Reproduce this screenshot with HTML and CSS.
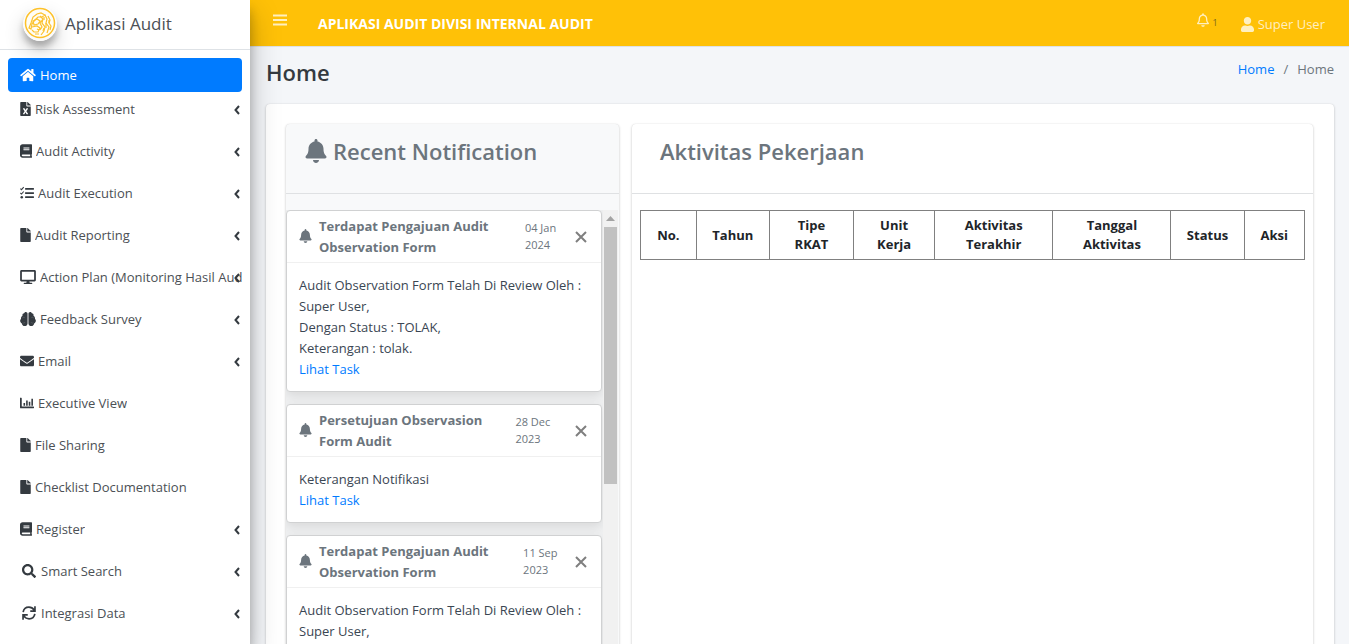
FILE: index.html
```html
<!DOCTYPE html>
<html lang="id">
<head>
<meta charset="utf-8">
<title>Aplikasi Audit</title>
<link rel="stylesheet" href="styles.css">
</head>
<body>
<svg class="sprite" aria-hidden="true">
  <symbol id="home" viewBox="0 0 576 512"><path d="M280.37 148.26L96 300.11V464a16 16 0 0 0 16 16l112.06-.29a16 16 0 0 0 15.92-16V368a16 16 0 0 1 16-16h64a16 16 0 0 1 16 16v95.64a16 16 0 0 0 16 16.05L464 480a16 16 0 0 0 16-16V300L295.67 148.26a12.19 12.19 0 0 0-15.3 0zM571.6 251.47L488 182.56V44.05a12 12 0 0 0-12-12h-56a12 12 0 0 0-12 12v72.61L318.47 43a48 48 0 0 0-61 0L4.34 251.47a12 12 0 0 0-1.6 16.9l25.5 31A12 12 0 0 0 45.15 301l235.22-193.74a12.19 12.19 0 0 1 15.3 0L530.9 301a12 12 0 0 0 16.9-1.6l25.5-31a12 12 0 0 0-1.7-16.93z"/></symbol>
  <symbol id="file" viewBox="0 0 384 512"><path d="M224 136V0H24C10.7 0 0 10.7 0 24v464c0 13.3 10.7 24 24 24h336c13.3 0 24-10.7 24-24V160H248c-13.2 0-24-10.8-24-24zm160-14.1v6.1H256V0h6.1c6.4 0 12.5 2.5 17 7l97.9 98c4.5 4.5 7 10.6 7 16.9z"/></symbol>
  <symbol id="excel" viewBox="0 0 384 512"><path fill-rule="evenodd" d="M224 136V0H24C10.700 0 0 10.700 0 24v464c0 13.300 10.700 24 24 24h336c13.300 0 24-10.700 24-24V160H248c-13.200 0-24-10.800-24-24zm60.100 106.500L224 336l60.100 93.500c5.100 8-.6 18.500-10.100 18.500h-34.900c-4.400 0-8.500-2.400-10.600-6.300C208.900 405.500 192 373 192 373c-6.400 14.800-10 20-36.600 68.800-2.100 3.900-6.100 6.300-10.500 6.300H110c-9.500 0-15.200-10.500-10.100-18.500l60.300-93.500-60.300-93.500c-5.200-8 .6-18.500 10.100-18.500h34.800c4.400 0 8.500 2.400 10.600 6.300 26.100 48.800 20 33.600 36.600 68.500 0 0 6.100-11.700 36.600-68.500 2.100-3.900 6.200-6.300 10.600-6.300H274c9.500-.1 15.200 10.400 10.100 18.400zM384 121.900v6.100H256V0h6.100c6.400 0 12.500 2.500 17 7l97.900 98c4.500 4.500 7 10.600 7 16.900z"/></symbol>
  <symbol id="book" viewBox="0 0 448 512"><path d="M448 360V24c0-13.300-10.700-24-24-24H96C43 0 0 43 0 96v320c0 53 43 96 96 96h328c13.300 0 24-10.700 24-24v-16c0-7.500-3.500-14.300-8.900-18.700-4.200-15.400-4.200-59.300 0-74.700 5.400-4.300 8.900-11.100 8.900-18.600zM128 134c0-3.300 2.700-6 6-6h212c3.300 0 6 2.700 6 6v20c0 3.300-2.700 6-6 6H134c-3.300 0-6-2.700-6-6v-20zm0 64c0-3.300 2.700-6 6-6h212c3.300 0 6 2.700 6 6v20c0 3.300-2.700 6-6 6H134c-3.300 0-6-2.700-6-6v-20zm253.400 250H96c-17.700 0-32-14.300-32-32 0-17.600 14.400-32 32-32h285.400c-1.900 17.100-1.900 46.900 0 64z"/></symbol>
  <symbol id="tasks" viewBox="0 0 512 512"><path d="M200 72h296a16 16 0 0 1 16 16v32a16 16 0 0 1-16 16H200a16 16 0 0 1-16-16V88a16 16 0 0 1 16-16zm0 152h296a16 16 0 0 1 16 16v32a16 16 0 0 1-16 16H200a16 16 0 0 1-16-16v-32a16 16 0 0 1 16-16zm0 152h296a16 16 0 0 1 16 16v32a16 16 0 0 1-16 16H200a16 16 0 0 1-16-16v-32a16 16 0 0 1 16-16z"/><circle cx="64" cy="408" r="46"/><path d="M14 98l40 38 82-92M14 256l40 38 82-92" fill="none" stroke="currentColor" stroke-width="38"/></symbol>
  <symbol id="desktop" viewBox="0 0 576 512"><path fill-rule="evenodd" d="M528 0H48C21.500 0 0 21.500 0 48v320c0 26.500 21.500 48 48 48h192l-16 48h-72c-13.300 0-24 10.700-24 24s10.700 24 24 24h272c13.300 0 24-10.700 24-24s-10.700-24-24-24h-72l-16-48h192c26.500 0 48-21.500 48-48V48c0-26.500-21.500-48-48-48zm-16 352H64V64h448v288z"/></symbol>
  <symbol id="brain" viewBox="0 0 576 512"><path d="M208 0c-30 0-55 21-62 49-35 1-62 30-62 65 0 8 1 15 4 22-33 16-56 48-56 88 0 8 1 15 3 22C14 264 0 292 0 324c0 44 27 79 64 93 3 53 46 95 100 95 56 0 108-41 108-96V64c0-35-29-64-64-64zM368 0c30 0 55 21 62 49 35 1 62 30 62 65 0 8-1 15-4 22 33 16 56 48 56 88 0 8-1 15-3 22 21 18 35 46 35 78 0 44-27 79-64 93-3 53-46 95-100 95-56 0-108-41-108-96V64c0-35 29-64 64-64z"/><path d="M78 220c25-27 58-37 86-14M92 398c35 18 72 2 86-27M498 220c-25-27-58-37-86-14M484 398c-35 18-72 2-86-27" fill="none" stroke="#fff" stroke-opacity=".35" stroke-width="16"/></symbol>
  <symbol id="mail" viewBox="0 0 512 512"><path d="M502.300 190.800c3.900-3.100 9.700-.2 9.700 4.700V400c0 26.500-21.500 48-48 48H48c-26.500 0-48-21.500-48-48V195.600c0-5 5.700-7.800 9.700-4.700 22.400 17.400 52.100 39.500 154.100 113.600 21.100 15.400 56.700 47.800 92.200 47.600 35.700.3 72-32.800 92.300-47.600 102-74.100 131.600-96.300 154-113.700zM256 320c23.200.4 56.600-29.200 73.400-41.400 132.700-96.300 142.800-104.700 173.400-128.700 5.800-4.500 9.200-11.500 9.200-18.900v-19c0-26.500-21.500-48-48-48H48c-26.500 0-48 21.500-48 48v19c0 7.400 3.400 14.300 9.200 18.900 30.600 23.900 40.700 32.400 173.400 128.700 16.800 12.200 50.200 41.800 73.400 41.400z"/></symbol>
  <symbol id="chart" viewBox="0 0 512 512"><path d="M0 64h48a16 16 0 0 1 16 16v304h432a16 16 0 0 1 16 16v32a16 16 0 0 1-16 16H32a32 32 0 0 1-32-32zM128 256h58v96h-58zM224 160h58v192h-58zM320 208h58v144h-58zM416 96h58v256h-58z"/></symbol>
  <symbol id="search" viewBox="0 0 512 512"><path d="M505 442.700L405.300 343c-4.500-4.500-10.600-7-17-7H372c27.600-35.300 44-79.700 44-128C416 93.100 322.900 0 208 0S0 93.100 0 208s93.100 208 208 208c48.300 0 92.700-16.400 128-44v16.300c0 6.400 2.500 12.500 7 17l99.700 99.700c9.400 9.400 24.600 9.400 33.900 0l28.300-28.300c9.400-9.400 9.400-24.600.1-34zM208 336c-70.700 0-128-57.200-128-128 0-70.700 57.200-128 128-128 70.700 0 128 57.200 128 128 0 70.700-57.200 128-128 128z"/></symbol>
  <symbol id="sync" viewBox="0 0 512 512"><path d="M42 222C60 118 146 44 252 44c82 0 150 42 192 106M470 290c-18 104-104 178-210 178-82 0-150-42-192-106M474 12v172H302M38 500V328h172" fill="none" stroke="currentColor" stroke-width="62"/></symbol>
  <symbol id="angle" viewBox="0 0 6 10"><path d="M5 1L1.500 5 5 9" fill="none" stroke="currentColor" stroke-width="2"/></symbol>
  <symbol id="bell" viewBox="0 0 448 512"><path d="M224 512c35.320 0 63.970-28.650 63.970-64H160.030c0 35.350 28.650 64 63.970 64zm215.390-149.710c-19.320-20.760-55.470-51.990-55.470-154.290 0-77.700-54.480-139.900-127.940-155.160V32c0-17.670-14.320-32-31.980-32s-31.980 14.330-31.980 32v20.840C118.560 68.100 64.080 130.300 64.080 208c0 102.300-36.150 133.530-55.470 154.290-6 6.450-8.660 14.160-8.610 21.710.11 16.400 12.980 32 32.100 32h383.800c19.120 0 32-15.600 32.100-32 .05-7.550-2.610-15.270-8.610-21.710z"/></symbol>
  <symbol id="bell-line" viewBox="0 0 448 512"><path d="M439.390 362.290c-19.320-20.760-55.470-51.990-55.470-154.290 0-77.700-54.480-139.900-127.940-155.160V32c0-17.670-14.320-32-31.980-32s-31.980 14.330-31.980 32v20.840C118.560 68.100 64.080 130.300 64.080 208c0 102.300-36.150 133.530-55.470 154.290-6 6.450-8.660 14.160-8.610 21.710.11 16.400 12.980 32 32.100 32h383.800c19.120 0 32-15.600 32.100-32 .05-7.550-2.610-15.270-8.610-21.710zM67.530 368c21.220-27.970 44.420-74.330 44.530-159.420 0-.2-.06-.38-.06-.58 0-61.860 50.140-112 112-112s112 50.140 112 112c0 .2-.06.38-.06.58.11 85.100 23.310 131.460 44.530 159.420H67.530zM224 512c35.320 0 63.970-28.650 63.970-64H160.030c0 35.350 28.650 64 63.970 64z"/></symbol>
  <symbol id="user" viewBox="0 0 448 512"><path d="M224 256c70.700 0 128-57.300 128-128S294.700 0 224 0 96 57.300 96 128s57.300 128 128 128zm89.600 32h-16.700c-22.200 10.200-46.900 16-72.900 16s-50.600-5.800-72.900-16h-16.700C60.200 288 0 348.200 0 422.400V464c0 26.500 21.500 48 48 48h352c26.500 0 48-21.500 48-48v-41.600c0-74.200-60.200-134.400-134.400-134.400z"/></symbol>
</svg>

<aside class="sidebar">
  <a class="brand" href="#">
    <svg class="brand-logo" viewBox="0 0 34 34" aria-hidden="true">
      <circle cx="17" cy="17" r="17" fill="#fbfbfa"/>
      <circle cx="17" cy="16" r="14.500" fill="#fffdf5" stroke="#fdc12a" stroke-width="1.500"/>
      <g fill="none" stroke="#fcc22f" stroke-width="1.200">
        <path d="M6 21l2-5 2-6 4-3 4-1 4 2-3 2-4 0-3 3-3 4-1 5z"/>
        <path d="M10 14l4-2 3 2-2 3-4 1zM9 20l5-1 3 2-2 4-4 0-2-2M17 9l3 3-1 4 3 4-1 4-3 4M22 8l2 4-1 4 3 4-2 6M25 9l2 4-1 3 2 3-1 4M14 22l2 1M12 27l4 0M20 12l-3 4 2 4-2 3"/>
        <path d="M21 10v3M23 16v5M26 13v3M20 24l1-3"/>
      </g>
    </svg>
    <span>Aplikasi Audit</span>
  </a>
  <nav class="menu">
    <a class="item active" href="#"><svg class="icon w16"><use href="#home"/></svg><span>Home</span></a>
    <a class="item" href="#"><svg class="icon w11"><use href="#excel"/></svg><span>Risk Assessment</span><svg class="angle"><use href="#angle"/></svg></a>
    <a class="item" href="#"><svg class="icon w12"><use href="#book"/></svg><span>Audit Activity</span><svg class="angle"><use href="#angle"/></svg></a>
    <a class="item" href="#"><svg class="icon w14"><use href="#tasks"/></svg><span>Audit Execution</span><svg class="angle"><use href="#angle"/></svg></a>
    <a class="item" href="#"><svg class="icon w11"><use href="#file"/></svg><span>Audit Reporting</span><svg class="angle"><use href="#angle"/></svg></a>
    <a class="item" href="#"><svg class="icon w16"><use href="#desktop"/></svg><span>Action Plan (Monitoring Hasil Audit)</span><svg class="angle"><use href="#angle"/></svg></a>
    <a class="item" href="#"><svg class="icon w16"><use href="#brain"/></svg><span>Feedback Survey</span><svg class="angle"><use href="#angle"/></svg></a>
    <a class="item" href="#"><svg class="icon w14"><use href="#mail"/></svg><span>Email</span><svg class="angle"><use href="#angle"/></svg></a>
    <a class="item" href="#"><svg class="icon w14"><use href="#chart"/></svg><span>Executive View</span></a>
    <a class="item" href="#"><svg class="icon w11"><use href="#file"/></svg><span>File Sharing</span></a>
    <a class="item" href="#"><svg class="icon w11"><use href="#file"/></svg><span>Checklist Documentation</span></a>
    <a class="item" href="#"><svg class="icon w12"><use href="#book"/></svg><span>Register</span><svg class="angle"><use href="#angle"/></svg></a>
    <a class="item" href="#"><svg class="icon w14 wide"><use href="#search"/></svg><span>Smart Search</span><svg class="angle"><use href="#angle"/></svg></a>
    <a class="item" href="#"><svg class="icon w14 wide"><use href="#sync"/></svg><span>Integrasi Data</span><svg class="angle"><use href="#angle"/></svg></a>
  </nav>
</aside>

<div class="page">
  <header class="topbar">
    <button class="toggle" type="button" aria-label="Menu"><svg viewBox="0 0 14 12"><path d="M0 1.500h14M0 6h14M0 10.500h14" stroke="currentColor" stroke-width="2"/></svg></button>
    <strong class="app-title">APLIKASI AUDIT DIVISI INTERNAL AUDIT</strong>
    <a class="alerts" href="#" aria-label="Notifikasi"><svg><use href="#bell-line"/></svg><span>1</span></a>
    <a class="user" href="#"><svg><use href="#user"/></svg><span>Super User</span></a>
  </header>

  <main class="content">
    <div class="heading">
      <h1>Home</h1>
      <nav class="crumbs"><a href="#">Home</a><span>/</span><span>Home</span></nav>
    </div>
    <div class="panel">
      <section class="card notif">
        <h2 class="card-head"><svg><use href="#bell"/></svg><span>Recent Notification</span></h2>
        <div class="feed">
          <div class="toasts">
            <article class="toast">
              <header><svg><use href="#bell"/></svg><strong>Terdapat Pengajuan Audit Observation Form</strong><small>04 Jan 2024</small><button type="button" aria-label="Tutup"><svg viewBox="0 0 12 12"><path d="M1 1l10 10M11 1L1 11"/></svg></button></header>
              <p>Audit Observation Form Telah Di Review Oleh : Super User,<br>Dengan Status : TOLAK,<br>Keterangan : tolak.<br><a href="#">Lihat Task</a></p>
            </article>
            <article class="toast">
              <header><svg><use href="#bell"/></svg><strong>Persetujuan Observasion Form Audit</strong><small>28 Dec 2023</small><button type="button" aria-label="Tutup"><svg viewBox="0 0 12 12"><path d="M1 1l10 10M11 1L1 11"/></svg></button></header>
              <p>Keterangan Notifikasi<br><a href="#">Lihat Task</a></p>
            </article>
            <article class="toast">
              <header><svg><use href="#bell"/></svg><strong>Terdapat Pengajuan Audit Observation Form</strong><small>11 Sep 2023</small><button type="button" aria-label="Tutup"><svg viewBox="0 0 12 12"><path d="M1 1l10 10M11 1L1 11"/></svg></button></header>
              <p>Audit Observation Form Telah Di Review Oleh : Super User,<br>Dengan Status : TOLAK,<br>Keterangan : tolak.<br><a href="#">Lihat Task</a></p>
            </article>
          </div>
          <div class="scroll" aria-hidden="true"><svg viewBox="0 0 13 17"><path d="M2 11l4.500-5 4.500 5z" fill="#a3a3a3"/></svg><div class="thumb"></div></div>
        </div>
      </section>
      <section class="card work">
        <h2 class="card-head">Aktivitas Pekerjaan</h2>
        <div class="table-wrap">
          <table>
            <colgroup><col class="c-no"><col class="c-year"><col class="c-type"><col class="c-unit"><col class="c-act"><col class="c-act"><col class="c-year"><col class="c-aksi"></colgroup>
            <thead><tr><th>No.</th><th>Tahun</th><th>Tipe RKAT</th><th>Unit Kerja</th><th>Aktivitas Terakhir</th><th>Tanggal Aktivitas</th><th>Status</th><th>Aksi</th></tr></thead>
          </table>
        </div>
      </section>
    </div>
  </main>
</div>
</body>
</html>
```
FILE: styles.css
```css
* { box-sizing: border-box; }
body {
  margin: 0;
  display: flex;
  height: 100vh;
  overflow: hidden;
  background: #f4f6f9;
  color: #212529;
  font: 400 13px/21px "Open Sans", "Noto Sans", sans-serif;
}
a { color: #007bff; text-decoration: none; }
svg { fill: currentColor; flex: none; }
.sprite { position: absolute; width: 0; height: 0; }
button { border: 0; background: none; padding: 0; color: inherit; display: flex; }

.sidebar {
  width: 250px;
  flex: none;
  background: #fff;
  z-index: 2;
  box-shadow: 0 14px 28px rgba(0,0,0,.25), 0 10px 10px rgba(0,0,0,.22);
}
.brand {
  display: flex;
  align-items: center;
  gap: 8px;
  height: 50px;
  padding: 0 23px 2px;
  border-bottom: 1px solid #dee2e6;
  color: #4b5055;
  font-size: 17px;
}
.brand-logo {
  width: 34px;
  height: 34px;
  border-radius: 50%;
  box-shadow: 0 10px 20px rgba(0,0,0,.19), 0 6px 6px rgba(0,0,0,.23);
}
.menu { padding: 8px; }
.item {
  display: flex;
  align-items: center;
  gap: 4px;
  height: 34px;
  margin-bottom: 8px;
  padding: 0 0 0 12px;
  color: #343a40;
  white-space: nowrap;
  position: relative;
}
.item span { overflow: hidden; color: #4b5055; }
.item.active { background: #007bff; color: #fff; border-radius: 4px; margin-bottom: 0; }
.item.active span { color: #fff; font-weight: 500; }
.icon { height: 14px; }
.w11 { width: 11px; }
.w12 { width: 12px; }
.w14 { width: 14px; }
.w16 { width: 16px; }
.wide { margin: 0 1px 0 2px; }
.angle { position: absolute; right: 2px; top: 13px; width: 6px; height: 10px; }

.page { flex: 1; min-width: 0; }
.topbar {
  display: flex;
  align-items: center;
  height: 46px;
  padding: 0 24px 0 23px;
  background: #ffc107;
  color: rgba(255,255,255,.75);
}
.toggle { margin-bottom: 6px; }
.toggle svg { width: 14px; height: 12px; }
.app-title { margin-left: 31px; color: #fff; font-size: 14px; }
.alerts {
  display: flex;
  align-items: center;
  gap: 4px;
  margin: 0 23px 4px auto;
  color: inherit;
  font-size: 9px;
}
.alerts svg { width: 12px; height: 14px; margin-bottom: 2px; }
.alerts span { color: #7a6520; padding-top: 2px; }
.user { display: flex; align-items: center; gap: 4px; padding-top: 2px; color: inherit; }
.user svg { width: 13px; height: 15px; }

.content { padding: 0 15px 0 16px; border-top: 1px solid #dee2e6; }
.heading { display: flex; justify-content: space-between; height: 57px; padding: 11px 0 0; }
h1, h2 { margin: 0; font-weight: 600; font-size: 22px; line-height: 28px; }
h1 { color: #343a40; }
.crumbs { display: flex; gap: 9px; padding-top: 1px; color: #6c757d; }
.panel {
  display: grid;
  grid-template-columns: minmax(0, 333fr) minmax(0, 681fr);
  gap: 13px;
  height: 800px;
  padding: 20px 21px 20px 20px;
  background: #fff;
  border-radius: 4px;
  box-shadow: 0 0 1px rgba(0,0,0,.13), 0 1px 3px rgba(0,0,0,.2);
}
.card { border-radius: 4px; box-shadow: 0 0 1px rgba(0,0,0,.13), 0 1px 3px rgba(0,0,0,.2); }
.notif { background: #f8f9fa; }
.card-head {
  display: flex;
  gap: 6px;
  height: 70px;
  padding: 13px 19px;
  border-bottom: 1px solid #dfe1e3;
  color: #6c757d;
}
.card-head svg { width: 22px; height: 24px; margin-top: 2px; }
.work .card-head { padding-left: 28px; }

.feed { display: flex; height: 600px; margin: 16px 1px 0 0; overflow: hidden; }
.toasts {
  flex: 1;
  display: flex;
  flex-direction: column;
  gap: 12px;
  padding-right: 1px;
  background: #f0f1f2;
}
.toast {
  background: #fff;
  border: 1px solid #d0d1d2;
  border-radius: 4px;
  box-shadow: 0 4px 12px rgba(0,0,0,.1);
}
.toast header {
  display: flex;
  align-items: center;
  padding: 5px 12px 4px;
  border-bottom: 1px solid #f0f0f0;
  color: #6c757d;
}
.toast header > svg { width: 13px; height: 14px; margin: 0 7px 2px 0; }
.toast strong { margin-right: auto; }
.toast small { font-size: 11px; line-height: 17px; padding-bottom: 2px; }
.toast button { margin: 0 2px 0 8px; }
.toast button svg { width: 12px; height: 12px; stroke: #7f7f7f; stroke-width: 2; }
.toast p { margin: 0; padding: 12px 12px 11px; color: #3a4653; }
.scroll { width: 15px; background: #f1f1f1; padding: 0 1px; }
.scroll svg { display: block; width: 13px; height: 17px; }
.thumb { height: 257px; background: #c1c1c1; }

.table-wrap { padding: 16px 8px; }
table { width: 100%; table-layout: fixed; border-collapse: collapse; }
th { height: 49px; padding: 0 14px; border: 1px solid #808080; line-height: 19px; font-weight: 700; }
.c-no { width: 8.400%; }
.c-year { width: 11%; }
.c-type { width: 12.700%; }
.c-unit { width: 12.200%; }
.c-act { width: 17.800%; }
.c-aksi { width: 9.100%; }
```
